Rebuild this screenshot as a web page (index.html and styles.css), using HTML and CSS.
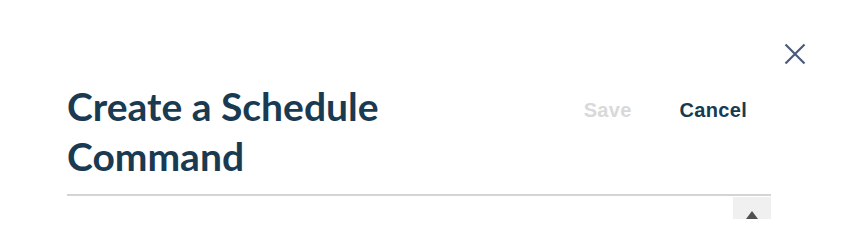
FILE: index.html
```html
<!DOCTYPE html>
<html>
<head>
<meta charset="utf-8">
<link rel="stylesheet" href="styles.css">
</head>
<body>
<div class="top">
  <button class="close" aria-label="Close">
    <svg width="22" height="22" viewBox="0 0 22 22"><path d="M1.5 1.5 L20.5 20.5 M20.5 1.5 L1.5 20.5" stroke="#4b5a78" stroke-width="2.2" fill="none"/></svg>
  </button>
</div>
<div class="content">
  <div class="header">
    <h1 class="title">Create a Schedule Command</h1>
    <div class="actions">
      <button class="btn btn-save" disabled>Save</button>
      <button class="btn btn-cancel">Cancel</button>
    </div>
  </div>
  <div class="divider"></div>
  <div class="body">
    <div class="scrollbar"><div class="arrow"></div></div>
  </div>
</div>
</body>
</html>
```

FILE: styles.css
```css
html, body {
  margin: 0;
  padding: 0;
  background: #ffffff;
}
.top {
  display: flex;
  justify-content: flex-end;
  padding: 43px 47px 0 0;
}
.close {
  border: 0;
  background: none;
  padding: 0;
  width: 22px;
  height: 22px;
  display: block;
}
.close svg { display: block; }
.content {
  margin: 0 82px 0 67px;
}
.header {
  display: flex;
  align-items: flex-start;
  margin-top: 16px;
}
.title {
  width: 50%;
  margin: 0;
  font-family: Lato, "Noto Sans", sans-serif;
  font-weight: 700;
  font-size: 39px;
  line-height: 50px;
  color: #1a3a52;
}
.actions {
  margin-left: auto;
  display: flex;
  padding-top: 17px;
}
.btn {
  border: 0;
  background: none;
  padding: 0 24px;
  font-family: "Liberation Sans", Arial, sans-serif;
  font-weight: 700;
  font-size: 20px;
  line-height: 24px;
  letter-spacing: 0.3px;
}
.btn-save { color: #d9d9d9; }
.btn-cancel { color: #173a53; }
.divider {
  margin-top: 13px;
  height: 2px;
  background: #d4d4d4;
}
.body {
  display: flex;
  justify-content: flex-end;
  padding-top: 1px;
}
.scrollbar {
  width: 38px;
  height: 22px;
  background: #f0f0f0;
  display: flex;
  justify-content: center;
  padding-top: 14px;
  box-sizing: border-box;
}
.arrow {
  width: 0;
  height: 0;
  border-left: 6px solid transparent;
  border-right: 6px solid transparent;
  border-bottom: 8px solid #505050;
}
```
